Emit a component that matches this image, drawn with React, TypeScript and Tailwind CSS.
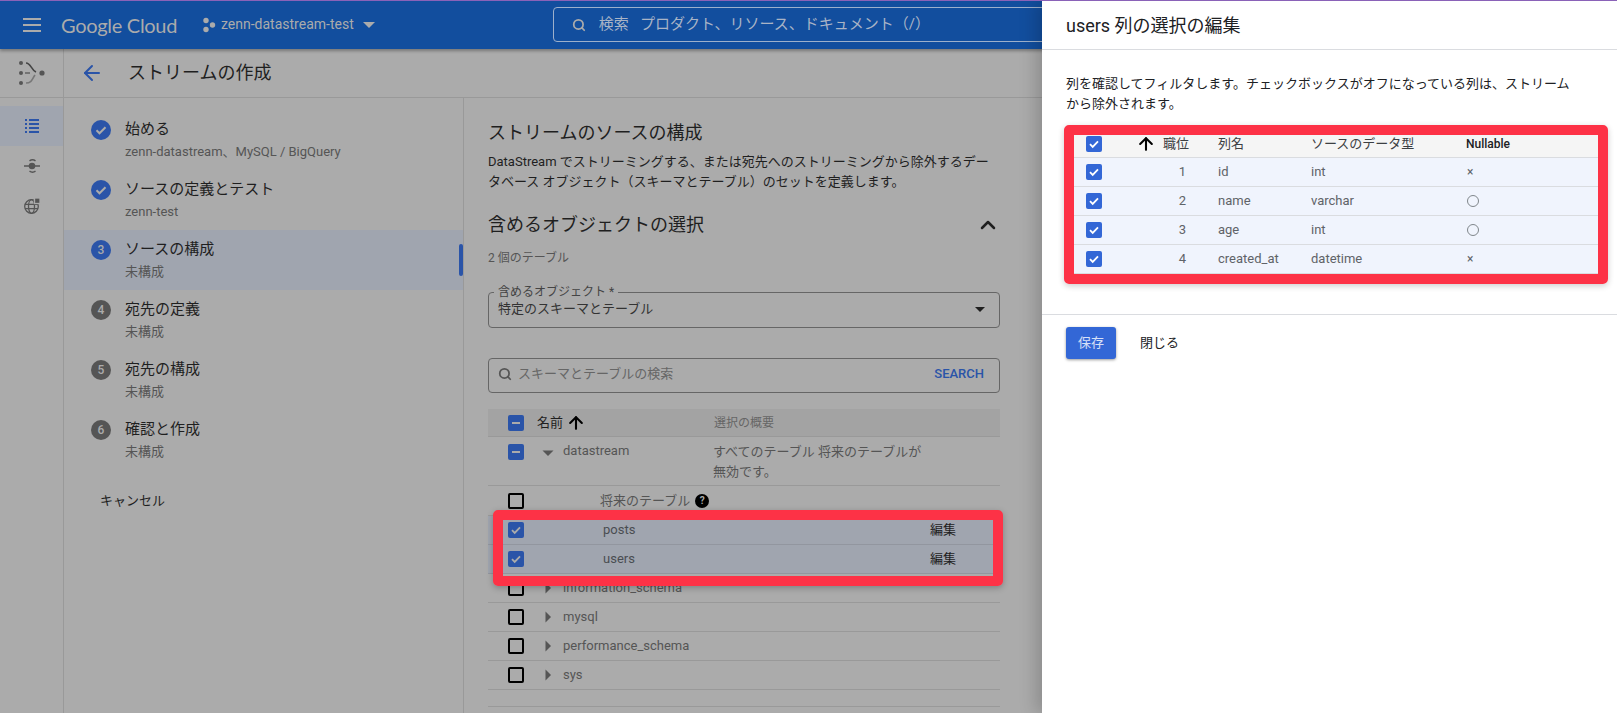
import { ArrowLeft, ArrowUp, ChevronUp, Search } from 'lucide-react';

const font = { fontFamily: 'Roboto, "Noto Sans CJK JP", sans-serif' };

function Check({ dim = true, mode = 'check' }: { dim?: boolean; mode?: 'check' | 'minus' | 'empty' }) {
  if (mode === 'empty') {
    return <div className="w-4 h-4 shrink-0 rounded-[2px] border-2 border-black" />;
  }
  return (
    <div className={`w-4 h-4 shrink-0 rounded-[2px] flex items-center justify-center ${dim ? 'bg-[#2a54a8]' : 'bg-[#3367d6]'}`}>
      {mode === 'check' ? (
        <svg width="12" height="12" viewBox="0 0 12 12" fill="none">
          <path d="M2 6.2l2.7 2.7L10 3.4" stroke={dim ? '#ababab' : '#fff'} strokeWidth="1.8" />
        </svg>
      ) : (
        <div className="w-2 h-0.5 bg-[#ababab]" />
      )}
    </div>
  );
}

function Caret({ open = false }: { open?: boolean }) {
  return (
    <svg width="12" height="12" viewBox="0 0 12 12" className="shrink-0" fill="#555">
      {open ? <path d="M0.5 3.5h11L6 9z" /> : <path d="M3.5 0.5v11L9 6z" />}
    </svg>
  );
}

function Step({ n, title, sub, done, active }: { n: number; title: string; sub: string; done?: boolean; active?: boolean }) {
  return (
    <div className={`relative h-[60px] flex pl-[27px] pt-[10px] ${active ? 'bg-[#a0a5af]' : ''}`}>
      {done ? (
        <div className="w-5 h-5 rounded-full bg-[#2a54a8] flex items-center justify-center">
          <svg width="14" height="14" viewBox="0 0 14 14" fill="none">
            <path d="M2.5 7.3l3 3L11.5 4.2" stroke="#ababab" strokeWidth="2" />
          </svg>
        </div>
      ) : (
        <div className={`w-5 h-5 rounded-full flex items-center justify-center text-[12px] font-medium text-[#ababab] ${active ? 'bg-[#2a54a8]' : 'bg-[#555555]'}`}>
          {n}
        </div>
      )}
      <div className="ml-[14px] -mt-px">
        <div className="text-[15px] leading-5 text-[#1f1f1f]">{title}</div>
        <div className="text-[13px] leading-5 mt-[3px] text-[#555555] whitespace-nowrap">{sub}</div>
      </div>
      {active && <div className="absolute right-0 top-[14px] w-1 h-8 rounded-[2px] bg-[#2a54a8]" />}
    </div>
  );
}

function SchemaRow({ name, mode = 'empty' }: { name: string; mode?: 'empty' | 'minus' }) {
  return (
    <div className="h-[29px] flex items-center pl-5 border-b border-[#999999] text-[13px] text-[#555555]">
      <Check mode={mode} />
      <div className="ml-[18px] mr-[9px]">
        <Caret />
      </div>
      <span>{name}</span>
    </div>
  );
}

function TableRow({ name }: { name: string }) {
  return (
    <div className="h-[29px] flex items-center pl-5 pr-[44px] justify-between bg-[#a0a5af] border-b border-[#92969f] text-[13px]">
      <div className="flex items-center">
        <Check />
        <span className="ml-[79px] text-[#4a4d52]">{name}</span>
      </div>
      <span className="text-[#1f1f1f]">編集</span>
    </div>
  );
}

function ColumnRow({ no, name, type, nullable }: { no: number; name: string; type: string; nullable: boolean }) {
  return (
    <div className="h-[29px] flex items-center pl-3 bg-[#f0f4fd] border-b border-[#dadce0] text-[13px] text-[#5f6368]">
      <Check dim={false} />
      <span className="w-[84px] text-right">{no}</span>
      <span className="ml-[32px] w-[93px]">{name}</span>
      <span className="w-[156px]">{type}</span>
      {nullable ? (
        <div className="w-3 h-3 rounded-full border border-[#80868b]" />
      ) : (
        <span className="text-[12px] leading-none">×</span>
      )}
    </div>
  );
}

export default function App() {
  return (
    <div className="relative w-[1617px] h-[713px] overflow-hidden bg-[#ababab] flex flex-col" style={font}>
      <div className="absolute top-0 left-0 right-0 h-px bg-[#8a62b8] z-30" />

      {/* top bar */}
      <header className="h-[49px] shrink-0 bg-[#124e9e] flex items-center shadow-[0_2px_3px_rgba(0,0,0,0.3)] z-10">
        <div className="ml-[23px] w-[18px] flex flex-col gap-[4px]">
          <div className="h-0.5 bg-[#ababab]" />
          <div className="h-0.5 bg-[#ababab]" />
          <div className="h-0.5 bg-[#ababab]" />
        </div>
        <span className="ml-[20px] w-[116px] text-[20px] tracking-[-0.3px] text-[#ababab] whitespace-nowrap" style={{ fontFamily: 'Lato, sans-serif' }}>
          Google Cloud
        </span>
        <svg width="14" height="16" viewBox="0 0 14 16" fill="#ababab" className="ml-[25px]">
          <circle cx="4" cy="3.5" r="2.7" />
          <circle cx="4" cy="12.5" r="2.7" />
          <circle cx="10.5" cy="8" r="2.7" />
        </svg>
        <span className="ml-[5px] text-[14px] text-[#ababab]">zenn-datastream-test</span>
        <svg width="12" height="6" viewBox="0 0 12 6" fill="#ababab" className="ml-[9px]">
          <path d="M0 0h12L6 6z" />
        </svg>
        <div className="ml-[178px] w-[510px] h-[35px] rounded-[4px] border border-[#9db0cb] flex items-center pl-[18px] text-[15px] text-[#a9b4c6]">
          <Search size={14} strokeWidth={3} className="text-[#ababab]" />
          <span className="ml-[13px] whitespace-pre">検索   プロダクト、リソース、ドキュメント（/）</span>
        </div>
      </header>

      <div className="flex flex-1 min-h-0">
        {/* icon rail */}
        <aside className="w-[64px] shrink-0 border-r border-[#999999]">
          <div className="h-[49px] border-b border-[#999999] flex items-center justify-center">
            <svg width="28" height="26" viewBox="0 0 28 26" fill="#555">
              <circle cx="3" cy="3" r="2" />
              <circle cx="3" cy="13" r="2" />
              <circle cx="3" cy="23" r="2" />
              <circle cx="24" cy="13" r="2.6" />
              <path d="M8 3c5 0 5 7 10 9" fill="none" stroke="#444" strokeWidth="1.6" />
              <path d="M7 13h5" fill="none" stroke="#666" strokeWidth="1.6" />
              <path d="M8 23c6 0 6-4 9-8" fill="none" stroke="#777" strokeWidth="1.6" />
            </svg>
          </div>
          <div className="pt-[8px]">
            <div className="h-10 bg-[#a0a5af] flex items-center justify-center">
              <svg width="16" height="16" viewBox="0 0 16 16" fill="#2a54a8">
                <rect x="1" y="1" width="2" height="2" />
                <rect x="5" y="1" width="10" height="2" />
                <rect x="1" y="5" width="2" height="2" />
                <rect x="5" y="5" width="10" height="2" />
                <rect x="1" y="9" width="2" height="2" />
                <rect x="5" y="9" width="10" height="2" />
                <rect x="1" y="13" width="2" height="2" />
                <rect x="5" y="13" width="10" height="2" />
              </svg>
            </div>
            <div className="h-10 flex items-center justify-center">
              <svg width="18" height="16" viewBox="0 0 18 16" fill="none" stroke="#555" strokeWidth="1.5">
                <path d="M1 8h5M12 8h5" />
                <circle cx="9" cy="8" r="2.5" fill="#555" />
                <path d="M6.5 2.8a5.5 5.5 0 0 1 6 0M6.5 13.2a5.5 5.5 0 0 0 6 0" />
              </svg>
            </div>
            <div className="h-10 flex items-center justify-center">
              <svg width="18" height="18" viewBox="0 0 18 18" fill="none" stroke="#555" strokeWidth="1.3">
                <circle cx="8.5" cy="9.5" r="6.8" />
                <ellipse cx="8.5" cy="9.5" rx="3" ry="6.8" />
                <path d="M2 7.3h13M2 11.7h13" />
                <rect x="11.5" y="1" width="5.5" height="5.5" fill="#555" stroke="#ababab" />
              </svg>
            </div>
          </div>
        </aside>

        <div className="flex-1 min-w-0 flex flex-col">
          {/* page title */}
          <div className="h-[49px] shrink-0 border-b border-[#999999] flex items-center pl-[16px]">
            <ArrowLeft size={24} strokeWidth={2} className="text-[#2a54a8]" />
            <h1 className="ml-[24px] -mt-px text-[18px] text-[#1f1f1f]">ストリームの作成</h1>
          </div>

          <div className="flex flex-1 min-h-0">
            {/* stepper */}
            <div className="w-[400px] shrink-0 border-r border-[#999999] pt-[12px]">
              <Step n={1} title="始める" sub="zenn-datastream、MySQL / BigQuery" done />
              <Step n={2} title="ソースの定義とテスト" sub="zenn-test" done />
              <Step n={3} title="ソースの構成" sub="未構成" active />
              <Step n={4} title="宛先の定義" sub="未構成" />
              <Step n={5} title="宛先の構成" sub="未構成" />
              <Step n={6} title="確認と作成" sub="未構成" />
              <div className="mt-[21px] pl-[36px] text-[13px] leading-5 text-[#1f1f1f]">キャンセル</div>
            </div>

            {/* source config */}
            <main className="w-[512px] ml-6 pt-[22px]">
              <h2 className="text-[18px] leading-[26px] text-[#1f1f1f]">ストリームのソースの構成</h2>
              <p className="mt-[6px] text-[13px] leading-5 text-[#1f1f1f]">
                DataStream でストリーミングする、または宛先へのストリーミングから除外するデータベース オブジェクト（スキーマとテーブル）のセットを定義します。
              </p>
              <div className="mt-[20px] flex items-center justify-between">
                <h2 className="text-[18px] leading-[26px] text-[#1f1f1f]">含めるオブジェクトの選択</h2>
                <ChevronUp size={24} strokeWidth={2.5} className="text-[#1f1f1f]" />
              </div>
              <div className="mt-[10px] text-[12px] leading-5 text-[#555555]">2 個のテーブル</div>

              <div className="relative mt-[24px] h-[36px] rounded-[4px] border border-[#666666] flex items-center justify-between pl-[9px] pr-[14px] pb-[2px] text-[13px] text-[#333333]">
                <span className="absolute -top-[9px] left-[5px] px-1 bg-[#ababab] text-[12px] leading-4 text-[#444444]">含めるオブジェクト *</span>
                <span>特定のスキーマとテーブル</span>
                <svg width="10" height="5" viewBox="0 0 10 5" fill="#1f1f1f">
                  <path d="M0 0h10L5 5z" />
                </svg>
              </div>

              <div className="mt-[30px] h-[35px] rounded-[4px] border border-[#666666] flex items-center pl-[9px] pr-[15px] pb-[3px] text-[13px]">
                <Search size={14} strokeWidth={3} className="text-[#555555]" />
                <span className="ml-[6px] flex-1 text-[#666666]">スキーマとテーブルの検索</span>
                <span className="font-medium text-[#2a54a8]">SEARCH</span>
              </div>

              {/* object tree */}
              <div className="mt-[16px]">
                <div className="h-[28px] flex items-center pl-5 bg-[#a3a3a3] border-b border-[#999999] text-[13px]">
                  <Check mode="minus" />
                  <span className="ml-[13px] text-[#1f1f1f]">名前</span>
                  <ArrowUp size={20} strokeWidth={2.5} className="ml-[3px] text-black" />
                  <span className="ml-[128px] text-[12px] text-[#666666]">選択の概要</span>
                </div>
                <div className="h-[49px] flex pl-5 pt-[4px] border-b border-[#999999] text-[13px] leading-5 text-[#555555]">
                  <div className="mt-[3px]">
                    <Check mode="minus" />
                  </div>
                  <div className="ml-[18px] mt-[6px] mr-[9px]">
                    <Caret open />
                  </div>
                  <span className="w-[150px]">datastream</span>
                  <span className="w-[220px] pt-px">すべてのテーブル 将来のテーブルが無効です。</span>
                </div>
                <div className="h-[30px] flex items-center pl-5 border-b border-[#999999] text-[13px] text-[#555555]">
                  <Check mode="empty" />
                  <span className="ml-[76px]">将来のテーブル</span>
                  <div className="ml-[5px] w-[14px] h-[14px] rounded-full bg-black text-[#ababab] text-[10px] font-bold flex items-center justify-center">?</div>
                </div>
                <TableRow name="posts" />
                <TableRow name="users" />
                <SchemaRow name="information_schema" />
                <SchemaRow name="mysql" />
                <SchemaRow name="performance_schema" />
                <SchemaRow name="sys" />
                <div className="h-[17px] border-b border-[#999999]" />
              </div>
            </main>
          </div>
        </div>
      </div>

      {/* annotation over the tree */}
      <div className="absolute left-[493px] top-[510px] w-[510px] h-[76px] rounded-[5px] border-[10px] border-[#fd3246] shadow-[0_2px_6px_rgba(0,0,0,0.25)]" />

      {/* side panel */}
      <aside className="absolute top-0 right-0 bottom-0 w-[575px] bg-white shadow-[-6px_0_16px_rgba(0,0,0,0.18)] z-20">
        <div className="h-[50px] border-b border-[#dadce0] flex items-center pl-6 pt-px text-[18px] text-[#202124]">users 列の選択の編集</div>
        <p className="mt-[24px] mx-6 w-[510px] text-[13px] leading-5 text-[#202124]">
          列を確認してフィルタします。チェックボックスがオフになっている列は、ストリームから除外されます。
        </p>

        <div className="relative mt-[21px] ml-[32px] w-[524px] border-b border-[#dadce0]">
          <div className="h-[23px] flex items-center pl-3 pb-[5px] bg-[#f5f5f5] border-b border-[#dadce0] text-[13px]">
            <Check dim={false} />
            <ArrowUp size={20} strokeWidth={2.5} className="ml-[34px] text-black" />
            <span className="ml-[7px] w-[55px] text-[#3c4043]">職位</span>
            <span className="w-[93px] text-[#3c4043]">列名</span>
            <span className="w-[155px] text-[#3c4043]">ソースのデータ型</span>
            <span className="text-[12px] font-medium text-[#202124]">Nullable</span>
          </div>
          <ColumnRow no={1} name="id" type="int" nullable={false} />
          <ColumnRow no={2} name="name" type="varchar" nullable />
          <ColumnRow no={3} name="age" type="int" nullable />
          <ColumnRow no={4} name="created_at" type="datetime" nullable={false} />
          <div className="absolute -left-[10px] -top-[10px] -right-[10px] -bottom-[10px] rounded-[5px] border-[10px] border-[#fd3246] shadow-[0_2px_6px_rgba(0,0,0,0.2)]" />
        </div>

        <div className="mt-[39px] border-t border-[#dadce0] pt-[12px] pl-6 flex items-center">
          <button className="w-[50px] h-8 rounded-[3px] bg-[#3367d6] text-white/80 text-[13px] shadow-[0_1px_3px_rgba(0,0,0,0.4)]">保存</button>
          <span className="ml-[24px] text-[13px] text-[#202124]">閉じる</span>
        </div>
      </aside>
    </div>
  );
}
